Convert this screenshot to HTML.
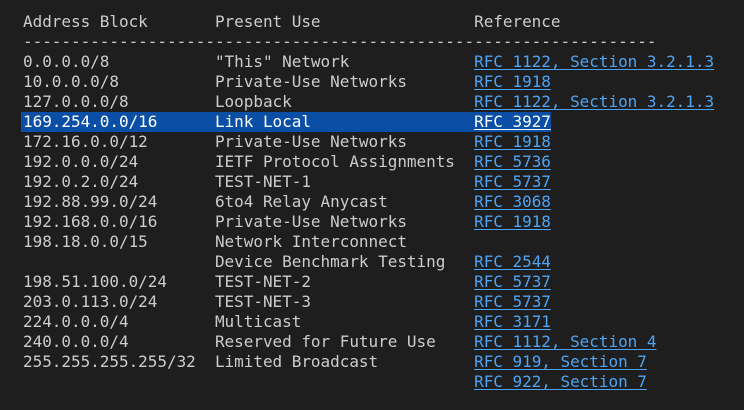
<!DOCTYPE html><html><head><style>
html,body{margin:0;padding:0;background:#1e1e1e;width:744px;height:410px;overflow:hidden}
pre{margin:0;position:absolute;left:23px;top:12px;font-family:"DejaVu Sans Mono","Liberation Mono",monospace;font-size:16px;letter-spacing:-0.035px;line-height:20px;color:#cccccc;white-space:pre}
a{color:#4fa3f2;text-decoration:underline;text-underline-offset:2px}
.hl{background:#0a4ea6;color:#fff;display:inline-block;margin-left:-2px;padding-left:2px}
.hl a{color:#fff}
</style></head><body><pre>Address Block       Present Use                Reference
------------------------------------------------------------------
0.0.0.0/8           "This" Network             <a>RFC 1122, Section 3.2.1.3</a>
10.0.0.0/8          Private-Use Networks       <a>RFC 1918</a>
127.0.0.0/8         Loopback                   <a>RFC 1122, Section 3.2.1.3</a>
<span class="hl">169.254.0.0/16      Link Local                 <a>RFC 3927</a></span>
172.16.0.0/12       Private-Use Networks       <a>RFC 1918</a>
192.0.0.0/24        IETF Protocol Assignments  <a>RFC 5736</a>
192.0.2.0/24        TEST-NET-1                 <a>RFC 5737</a>
192.88.99.0/24      6to4 Relay Anycast         <a>RFC 3068</a>
192.168.0.0/16      Private-Use Networks       <a>RFC 1918</a>
198.18.0.0/15       Network Interconnect
                    Device Benchmark Testing   <a>RFC 2544</a>
198.51.100.0/24     TEST-NET-2                 <a>RFC 5737</a>
203.0.113.0/24      TEST-NET-3                 <a>RFC 5737</a>
224.0.0.0/4         Multicast                  <a>RFC 3171</a>
240.0.0.0/4         Reserved for Future Use    <a>RFC 1112, Section 4</a>
255.255.255.255/32  Limited Broadcast          <a>RFC 919, Section 7</a>
                                               <a>RFC 922, Section 7</a></pre></body></html>
